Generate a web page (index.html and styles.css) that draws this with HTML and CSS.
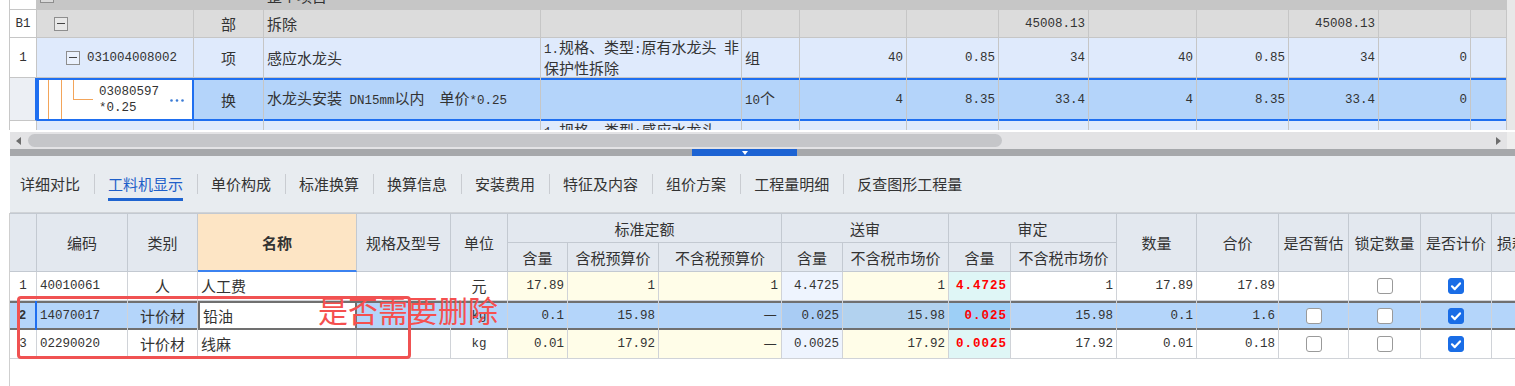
FILE: index.html
```html
<!DOCTYPE html>
<html lang="zh-CN">
<head>
<meta charset="utf-8">
<title>工料机显示</title>
<link rel="stylesheet" href="styles.css">
</head>
<body>
<div class="top">
  <div class="tgrid">
    <div class="trow r0">
      <div class="cn"></div><div class="tree t0"><span class="tb"></span></div><div></div><div>整个项目</div><div></div><div></div><div></div><div></div><div></div><div></div><div></div><div></div><div></div><div></div>
    </div>
    <div class="trow rb">
      <div class="cn n">B1</div><div class="tree tb1"><span class="tb b1"></span></div><div class="c">部</div><div>拆除</div><div></div><div></div><div></div><div></div><div class="r n">45008.13</div><div></div><div></div><div class="r n">45008.13</div><div></div><div></div>
    </div>
    <div class="trow r1">
      <div class="cn n">1</div><div class="tree tr1"><span class="tb b2"></span><span class="n code1">031004008002</span></div><div class="c">项</div><div>感应水龙头</div><div><span><span class="n">1.</span>规格、类型<span class="n">:</span>原有水龙头<span class="n"> </span>非<br>保护性拆除</span></div><div>组</div><div class="r n">40</div><div class="r n">0.85</div><div class="r n">34</div><div class="r n">40</div><div class="r n">0.85</div><div class="r n">34</div><div class="r n">0</div><div></div>
    </div>
    <div class="trow rs">
      <div class="cn"></div><div class="tree trs"><span class="n code2">03080597<br>*0.25</span><svg class="dots" width="14" height="3" viewBox="0 0 14 3"><circle cx="1.5" cy="1.5" r="1.3" fill="#3a7bd5"/><circle cx="7" cy="1.5" r="1.3" fill="#3a7bd5"/><circle cx="12.5" cy="1.5" r="1.3" fill="#3a7bd5"/></svg></div><div class="c">换</div><div><span>水龙头安装<span class="n"> DN15mm</span>以内<span class="n">  </span>单价<span class="n">*0.25</span></span></div><div></div><div><span><span class="n">10</span>个</span></div><div class="r n">4</div><div class="r n">8.35</div><div class="r n">33.4</div><div class="r n">4</div><div class="r n">8.35</div><div class="r n">33.4</div><div class="r n">0</div><div></div>
    </div>
    <div class="trow rp">
      <div class="cn"></div><div class="tree trp"></div><div></div><div></div><div class="topal"><span><span class="n">1.</span>规格、类型<span class="n">:</span>感应水龙头</span></div><div></div><div></div><div></div><div></div><div></div><div></div><div></div><div></div><div></div>
    </div>
  </div>
  <div class="vscroll"></div>
</div>

<div class="hscroll">
  <i class="al"></i><div class="thumb"></div><div class="sp"></div><i class="ar"></i><div class="corner"></div>
</div>

<div class="split"><div class="split-blue"><i class="tri"></i></div></div>

<div class="tabs">
  <span class="tab">详细对比</span><i class="sep"></i>
  <span class="tab on">工料机显示</span><i class="sep"></i>
  <span class="tab">单价构成</span><i class="sep"></i>
  <span class="tab">标准换算</span><i class="sep"></i>
  <span class="tab">换算信息</span><i class="sep"></i>
  <span class="tab">安装费用</span><i class="sep"></i>
  <span class="tab">特征及内容</span><i class="sep"></i>
  <span class="tab">组价方案</span><i class="sep"></i>
  <span class="tab">工程量明细</span><i class="sep"></i>
  <span class="tab">反查图形工程量</span>
</div>

<div class="lower">
  <div class="lgrid">
    <div class="lhead">
      <div class="rs2"></div>
      <div class="rs2">编码</div>
      <div class="rs2">类别</div>
      <div class="rs2 name-h">名称</div>
      <div class="rs2">规格及型号</div>
      <div class="rs2">单位</div>
      <div class="cs3">标准定额</div>
      <div class="cs2">送审</div>
      <div class="cs2">审定</div>
      <div class="rs2">数量</div>
      <div class="rs2">合价</div>
      <div class="rs2">是否暂估</div>
      <div class="rs2">锁定数量</div>
      <div class="rs2">是否计价</div>
      <div class="rs2 lft">损耗率</div>
      <div class="sub g7">含量</div>
      <div class="sub g8">含税预算价</div>
      <div class="sub g9">不含税预算价</div>
      <div class="sub g10">含量</div>
      <div class="sub g11">不含税市场价</div>
      <div class="sub g12">含量</div>
      <div class="sub g13">不含税市场价</div>
    </div>
    <div class="lrow">
      <div class="cn n">1</div><div class="n">40010061</div><div class="c">人</div><div>人工费</div><div></div><div class="c">元</div><div class="r n y">17.89</div><div class="r n y">1</div><div class="r n y">1</div><div class="r n lb">4.4725</div><div class="r n y">1</div><div class="r n cy red">4.4725</div><div class="r n">1</div><div class="r n">17.89</div><div class="r n">17.89</div><div></div><div class="c"><span class="cb"></span></div><div class="c"><span class="cb on"><svg width="16" height="16" viewBox="0 0 16 16"><path d="M4 8.3l2.8 2.8L12 5.4" fill="none" stroke="#fff" stroke-width="2.2" stroke-linecap="round" stroke-linejoin="round"/></svg></span></div><div></div>
    </div>
    <div class="lrow sel2">
      <div class="cn n">2</div><div class="n">14070017</div><div class="c">计价材</div><div class="edit">铅油</div><div></div><div class="c n">kg</div><div class="r n">0.1</div><div class="r n">15.98</div><div class="r"><span class="dash">—</span></div><div class="r n ssq">0.025</div><div class="r n ssp">15.98</div><div class="r n sdq red">0.025</div><div class="r n">15.98</div><div class="r n">0.1</div><div class="r n">1.6</div><div class="c"><span class="cb"></span></div><div class="c"><span class="cb"></span></div><div class="c"><span class="cb on"><svg width="16" height="16" viewBox="0 0 16 16"><path d="M4 8.3l2.8 2.8L12 5.4" fill="none" stroke="#fff" stroke-width="2.2" stroke-linecap="round" stroke-linejoin="round"/></svg></span></div><div></div>
    </div>
    <div class="lrow">
      <div class="cn n">3</div><div class="n">02290020</div><div class="c">计价材</div><div>线麻</div><div></div><div class="c n">kg</div><div class="r n y">0.01</div><div class="r n y">17.92</div><div class="r y"><span class="dash">—</span></div><div class="r n lb">0.0025</div><div class="r n y">17.92</div><div class="r n cy red">0.0025</div><div class="r n">17.92</div><div class="r n">0.01</div><div class="r n">0.18</div><div class="c"><span class="cb"></span></div><div class="c"><span class="cb"></span></div><div class="c"><span class="cb on"><svg width="16" height="16" viewBox="0 0 16 16"><path d="M4 8.3l2.8 2.8L12 5.4" fill="none" stroke="#fff" stroke-width="2.2" stroke-linecap="round" stroke-linejoin="round"/></svg></span></div><div></div>
    </div>
  </div>
</div>

<div class="mark"></div>
<div class="mark-text">是否需要删除</div>
</body>
</html>
```
FILE: styles.css
```css
* { box-sizing: border-box; }
html, body { margin: 0; padding: 0; }
body {
  width: 1515px;
  height: 386px;
  overflow: hidden;
  position: relative;
  background: #fff;
  font-family: "Noto Sans CJK SC", "Noto Sans", sans-serif;
  font-size: 15px;
  color: #333;
}
.n { font-family: "Liberation Mono", monospace; font-size: 12.5px; }

/* ---------- top grid ---------- */
.top {
  display: flex;
  height: 130px;
  overflow: hidden;
  margin-left: 9px;
  border-left: 1px solid #c8c8c8;
}
.tgrid { width: 1497px; flex: none; }
.vscroll { flex: 1; background: #e8e8e8; }
.trow {
  display: grid;
  grid-template-columns: 27px 157px 70px 277px 201px 58px 107px 92px 90px 108px 92px 90px 92px 36px;
  height: 40px;
}
.trow > div {
  display: flex;
  align-items: center;
  padding: 0 3px;
  border-right: 1px solid #c6c6c6;
  border-bottom: 1px solid #c6c6c6;
  white-space: pre;
  overflow: hidden;
  line-height: 18px;
}
.trow > .c { justify-content: center; }
.trow > .r { justify-content: flex-end; }
.trow > .cn { justify-content: center; background: #fff; }
.trow > .topal { align-items: flex-start; }

.r0 { height: 28px; margin-top: -18px; }
.r0 > div { background: #c6c6c6; }
.rb { height: 28px; }
.rb > div { background: #dcdcdc; }
.r1 > div, .rp > div { background: #dfeafc; }

.rs { height: 43px; }
.rs > div {
  background: #b4d4fa;
  border-bottom: none;
  box-shadow: inset 0 2px #1f6ff0, inset 0 -2px #1f6ff0;
}
.rs > .cn {
  background: #eceff4;
  box-shadow: none;
  border-right: 2px solid #1f6ff0;
  border-bottom: 1px solid #c6c6c6;
}

/* tree column */
.trow > .tree {
  padding: 0;
  background-repeat: no-repeat;
  --o: linear-gradient(#f3a55a, #f3a55a);
}
.t0 {
  background-image: var(--o);
  background-position: 11px 20px;
  background-size: 1px 100%;
}
.tb1 {
  background-image: var(--o), var(--o), var(--o);
  background-position: 11px 0, 11px 13px, 24px 20px;
  background-size: 1px 100%, 6px 1px, 1px 100%;
}
.tr1 {
  background-image: var(--o), var(--o), var(--o), var(--o);
  background-position: 11px 0, 24px 0, 24px 19px, 36px 26px;
  background-size: 1px 100%, 1px 100%, 5px 1px, 1px 100%;
}
.rs > .trs {
  background-color: #fff;
  border: 2px solid #1f6ff0;
  box-shadow: none;
  background-image: var(--o), var(--o), var(--o), var(--o);
  background-position: 9px 0, 22px 0, 34px 0, 34px 19px;
  background-size: 1px 100%, 1px 100%, 1px 19px, 20px 1px;
}
.trp {
  background-image: var(--o), var(--o);
  background-position: 11px 0, 24px 0;
  background-size: 1px 100%, 1px 100%;
}
.tb {
  flex: none;
  width: 14px;
  height: 14px;
  border: 1px solid #8e8e8e;
  background: rgba(255, 255, 255, 0.35);
  display: flex;
  align-items: center;
  justify-content: center;
  margin-left: 3px;
}
.tb::before { content: ""; width: 8px; height: 1px; background: #444; }
.tb.b1 { margin-left: 17px; }
.tb.b2 { margin-left: 29px; }
.code1 { margin-left: 7px; }
.code2 { margin-left: 60px; line-height: 16px; }
.dots { margin-left: auto; margin-right: 8px; margin-top: 2px; }

/* ---------- horizontal scrollbar ---------- */
.hscroll {
  margin: 2px 0 0 10px;
  height: 17px;
  background: #e3e3e5;
  display: flex;
  align-items: center;
}
.al {
  margin-left: 6px;
  width: 0; height: 0;
  border-top: 4px solid transparent;
  border-bottom: 4px solid transparent;
  border-right: 5px solid #6d6d6d;
}
.thumb {
  margin-left: 7px;
  width: 974px;
  height: 13px;
  border-radius: 7px;
  background: #c5c6c9;
}
.sp { flex: 1; }
.ar {
  margin-right: 6px;
  width: 0; height: 0;
  border-top: 4px solid transparent;
  border-bottom: 4px solid transparent;
  border-left: 5px solid #6d6d6d;
}
.corner { width: 8px; height: 17px; background: #eeeeee; }

/* ---------- splitter ---------- */
.split {
  margin-left: 10px;
  height: 7px;
  background: #a6a8ab;
  display: flex;
}
.split-blue {
  margin-left: 682px;
  width: 105px;
  background: #1c63d3;
  display: flex;
  justify-content: center;
  padding-top: 2px;
}
.tri {
  width: 0; height: 0;
  border-left: 3px solid transparent;
  border-right: 3px solid transparent;
  border-top: 4px solid #fff;
}

/* ---------- tabs ---------- */
.tabs {
  margin-left: 10px;
  height: 57px;
  border-bottom: 1px solid #d0d3d7;
  background: #e8ecf0;
  display: flex;
  align-items: center;
  padding-left: 10px;
}
.tab {
  padding: 7px 0 4px;
  border-bottom: 3px solid transparent;
  line-height: 20px;
  color: #333;
  white-space: nowrap;
}
.tab.on { color: #1f5fc9; border-bottom-color: #1f64d0; }
.sep {
  width: 1px;
  height: 20px;
  background: #c9ccd1;
  margin: 0 13px 0 14px;
}

/* ---------- lower grid ---------- */
.lower {
  margin-left: 9px;
  border-left: 1px solid #cfcfcf;
  height: 173px;
  overflow: hidden;
}
.lgrid { width: 1550px; border-top: 1px solid #c3c9d1; }
.lhead, .lrow {
  display: grid;
  grid-template-columns: 27px 91px 70px 159px 94px 57px 60px 91px 123px 61px 106px 62px 106px 80px 82px 70px 72px 71px 68px;
}
.lhead { grid-template-rows: 29px 29px; background: #e3e8ef; }
.lhead > div {
  display: flex;
  align-items: center;
  justify-content: center;
  border-right: 1px solid #c3c9d1;
  border-bottom: 1px solid #c3c9d1;
  white-space: nowrap;
  overflow: hidden;
}
.lhead > .rs2 { grid-row: span 2; }
.lhead > .cs2 { grid-column: span 2; }
.lhead > .cs3 { grid-column: span 3; }
.lhead > .sub { grid-row: 2; }
.lhead > .g7 { grid-column: 7; }
.lhead > .g8 { grid-column: 8; }
.lhead > .g9 { grid-column: 9; }
.lhead > .g10 { grid-column: 10; }
.lhead > .g11 { grid-column: 11; }
.lhead > .g12 { grid-column: 12; }
.lhead > .g13 { grid-column: 13; }
.lhead > .name-h {
  background: #fde5c5;
  font-weight: bold;
  border-bottom: 2px solid #3b82f0;
}
.lhead > .lft { justify-content: flex-start; padding-left: 5px; }

.lrow { height: 29px; }
.lrow > div {
  display: flex;
  align-items: center;
  padding: 0 3px;
  border-right: 1px solid #d0d3d8;
  border-bottom: 1px solid #d0d3d8;
  white-space: nowrap;
  overflow: hidden;
  background: #fff;
  line-height: 18px;
}
.lrow > .c { justify-content: center; }
.lrow > .r { justify-content: flex-end; }
.lrow > .cn { justify-content: center; }
.lrow > .y { background: #fffde8; }
.lrow > .lb { background: #eef4fe; }
.lrow > .cy { background: #dff6f6; }
.red { color: #ff0000; font-weight: bold; letter-spacing: 1px; }
.dash { line-height: 18px; margin-right: 1px; padding-bottom: 3px; }

.sel2 > div {
  background: #b4d5fa;
  border-bottom: none;
  box-shadow: inset 0 2px #707070, inset 0 -2px #707070;
}
.sel2 > .cn { border-right: 2px solid #1f6ff0; font-weight: bold; }
.sel2 > .edit {
  background: #fff;
  border-left: 2px solid #707070;
  border-right: 2px solid #707070;
}
.sel2 > .ssq { background: #a9ccf4; }
.sel2 > .ssp { background: #b2d2ef; }
.sel2 > .sdq { background: #9dcff6; }

.cb {
  width: 16px;
  height: 16px;
  border: 1px solid #9a9a9a;
  border-radius: 3px;
  background: #fff;
  display: flex;
}
.cb.on { background: #1a6de6; border-color: #1a6de6; }
.cb.on svg { margin: -1px; }

/* ---------- annotation overlay ---------- */
.mark {
  position: absolute;
  left: 17px;
  top: 296px;
  width: 394px;
  height: 63px;
  border: 3px solid #f05252;
  border-radius: 4px;
}
.mark-text {
  position: absolute;
  left: 318px;
  top: 296px;
  font-size: 30px;
  line-height: 26px;
  color: #f5504f;
  white-space: nowrap;
}
```
